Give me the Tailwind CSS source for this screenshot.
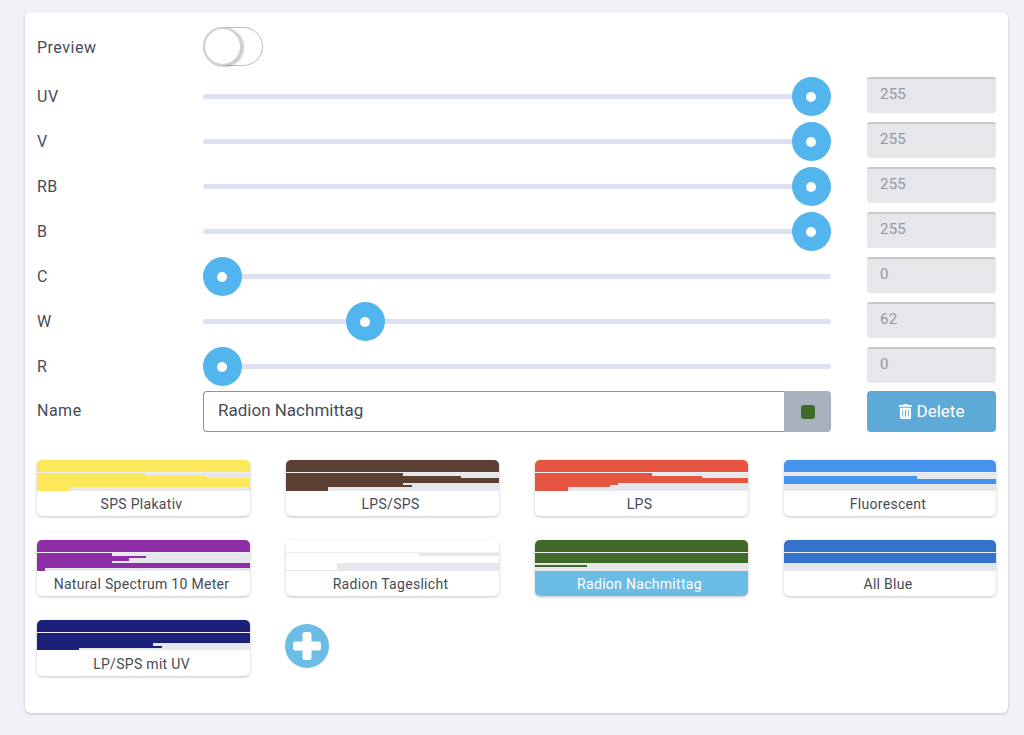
<!DOCTYPE html>
<html lang="de">
<head>
  <meta charset="UTF-8" />
  <title>Light Presets</title>
  <script src="https://cdn.jsdelivr.net/npm/@tailwindcss/browser@4"></script>
</head>
<body class="bg-[#f0f2f7] h-[735px] overflow-hidden font-['Roboto',sans-serif] text-[#474b55]">

  <main class="mx-[25px] mt-[12px] w-[983px] h-[701px] bg-white rounded-md shadow-[0_1px_3px_rgba(0,0,0,0.22)] px-[12px] pt-[15px]">

    <!-- Preview -->
    <div class="flex items-center h-[39px] mb-[11px]">
      <div class="w-[166px] text-[16px] tracking-[0.5px] pt-[2px]">Preview</div>
      <div class="relative w-[60px] h-[39px] rounded-full border border-[#b9bcc3] bg-white">
        <div class="absolute -left-px -top-px w-[39px] h-[39px] rounded-full border-[2px] border-[#cdd0d5] bg-white shadow-[2px_1px_2px_rgba(0,0,0,0.22)]"></div>
      </div>
    </div>

    <!-- Channels -->
    <div id="channels"></div>

    <!-- Name -->
    <div class="flex items-center h-[41px] mt-[-1px]">
      <div class="w-[166px] text-[16px] tracking-[0.5px] pb-[1px]">Name</div>
      <div class="flex w-[628px] h-[41px]">
        <div class="flex-1 flex items-center pl-[14px] border border-[#8d929b] border-r-0 rounded-l-[4px] text-[17px] pb-[1px]">Radion Nachmittag</div>
        <div class="w-[47px] flex items-center justify-center bg-[#a9b0bd] rounded-r-[4px]">
          <div class="w-[14px] h-[14px] rounded-[3px] bg-[#3f6a28]"></div>
        </div>
      </div>
      <button class="ml-[36px] w-[129px] h-[41px] flex items-center justify-center gap-[5px] bg-[#5eaad6] rounded-[4px] text-white text-[17px]">
        <svg class="w-[13px] h-[15px]" viewBox="0 0 448 512" fill="currentColor"><path d="M32 464a48 48 0 0 0 48 48h288a48 48 0 0 0 48-48V128H32zm272-256a16 16 0 0 1 32 0v224a16 16 0 0 1-32 0zm-96 0a16 16 0 0 1 32 0v224a16 16 0 0 1-32 0zm-96 0a16 16 0 0 1 32 0v224a16 16 0 0 1-32 0zM432 32H312l-9.4-18.7A24 24 0 0 0 281.1 0H166.8a23.72 23.72 0 0 0-21.4 13.3L136 32H16A16 16 0 0 0 0 48v32a16 16 0 0 0 16 16h416a16 16 0 0 0 16-16V48a16 16 0 0 0-16-16z"/></svg>
        Delete
      </button>
    </div>

    <!-- Presets -->
    <div id="presets" class="grid grid-cols-[213px_213px_213px_212px] gap-x-[36px] gap-y-[24px] mt-[28px]"></div>
  </main>

  <script>
    const channels = [["UV", 255], ["V", 255], ["RB", 255], ["B", 255], ["C", 0], ["W", 62], ["R", 0]];

    // [height px, bar width %]
    const presets = [
      { name: "SPS Plakativ", color: "#fde85c", rows: [[12, 100], [1, -1], [3.3, 51], [1.7, 79], [9.5, 100], [3.5, 15.5]] },
      { name: "LPS/SPS", color: "#5c4034", rows: [[12, 100], [1, -1], [3.3, 55], [1.7, 82], [5, 100], [2.3, 55], [2.2, 59], [3.5, 19.5]] },
      { name: "LPS", color: "#e55541", rows: [[12, 100], [1, -1], [3.3, 55], [1.7, 78.5], [5, 100], [2.3, 39], [2.2, 35], [3.5, 15.7]] },
      { name: "Fluorescent", color: "#4694ee", rows: [[12, 100], [1, -1], [3, 0], [2.5, 62.6], [5, 100], [7.5, 0]] },
      { name: "Natural Spectrum 10 Meter", color: "#8e2ea6", rows: [[12, 100], [1, -1], [2.5, 35], [2.5, 51], [2.5, 43], [2.5, 35], [5, 100], [3, 3.8]] },
      { name: "Radion Tageslicht", color: "#ffffff", rows: [[12, 100], [1, -1], [2.7, 62.6], [7.3, 100], [7, 24], [1, 0]] },
      { name: "Radion Nachmittag", color: "#3f6a28", active: true, rows: [[12, 100], [1, -1], [10, 100], [2.3, 0], [2, 24.3], [3.7, 0]] },
      { name: "All Blue", color: "#3572cc", rows: [[12, 100], [1, -1], [10, 100], [8, 0]] },
      { name: "LP/SPS mit UV", color: "#1b2078", rows: [[12, 100], [1, -1], [10, 100], [2.5, 54.6], [2.5, 58.8], [2, 19.7]] }
    ];

    document.getElementById("channels").innerHTML = channels.map(([label, value]) => `
      <div class="flex items-center h-[36px] mb-[9px]">
        <div class="w-[166px] text-[16px] tracking-[0.5px] pt-[3px]">${label}</div>
        <div class="relative w-[628px] h-[39px] mt-[3px] flex items-center">
          <div class="w-full h-[5px] rounded-full bg-[#dde0f2]"></div>
          <div class="absolute top-0 w-[39px] h-[39px] rounded-full bg-[#53b5ee] flex items-center justify-center" style="left:${value / 255 * 589 - 0.5}px">
            <div class="w-[10px] h-[10px] rounded-full bg-white"></div>
          </div>
        </div>
        <div class="ml-[36px] w-[129px] h-[36px] flex items-center pl-[13px] pb-[3px] bg-[#e5e7eb] rounded-[3px] border-t-[2px] border-[#c6c8cc] text-[#9298a6] text-[15px] tracking-[0.2px]">${value}</div>
      </div>`).join("");

    document.getElementById("presets").innerHTML = presets.map(p => `
      <div class="h-[56px] rounded-[5px] overflow-hidden bg-white shadow-[0_1px_3px_rgba(0,0,0,0.25)]">
        <div class="h-[31px] flex flex-col">
          ${p.rows.map(([h, w]) => `<div class="${w < 0 ? "bg-[#eeeff2]" : "bg-[#e5e7eb]"}" style="height:${h}px"><div class="h-full" style="width:${Math.max(w, 0)}%;background:${p.color}"></div></div>`).join("")}
        </div>
        <div class="h-[25px] flex items-center justify-center pr-[4px] pt-[2px] text-[14px] tracking-[0.3px] ${p.active ? "bg-[#6bbde6] text-white" : ""}">${p.name}</div>
      </div>`).join("") + `
      <button class="w-[44px] h-[44px] mt-[4px] -ml-px rounded-full bg-[#6bbde6] flex items-center justify-center">
        <svg class="w-[28px] h-[28px]" viewBox="0 0 28 28" fill="white"><rect x="9.5" y="0" width="9" height="28" rx="2.5"/><rect x="0" y="9.5" width="28" height="9" rx="2.5"/></svg>
      </button>`;
  </script>
</body>
</html>
